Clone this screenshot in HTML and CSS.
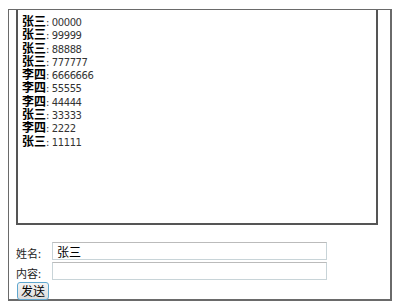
FILE: index.html
```html
<!DOCTYPE html>
<html lang="zh">
<head>
    <meta charset="UTF-8">
    <title>聊天室</title>
    <link rel="stylesheet" href="styles.css">
</head>
<body>
    <div class="frame">
        <div class="messages">
            <div class="msg"><b>张三</b>: 00000</div>
            <div class="msg"><b>张三</b>: 99999</div>
            <div class="msg"><b>张三</b>: 88888</div>
            <div class="msg"><b>张三</b>: 777777</div>
            <div class="msg"><b>李四</b>: 6666666</div>
            <div class="msg"><b>李四</b>: 55555</div>
            <div class="msg"><b>李四</b>: 44444</div>
            <div class="msg"><b>张三</b>: 33333</div>
            <div class="msg"><b>李四</b>: 2222</div>
            <div class="msg"><b>张三</b>: 11111</div>
        </div>
        <div class="form">
            <div class="row">
                <label>姓名:</label>
                <input type="text" value="张三">
            </div>
            <div class="row">
                <label>内容:</label>
                <input type="text">
            </div>
            <button>发送</button>
        </div>
    </div>
</body>
</html>
```

FILE: styles.css
```css
body {
    margin: 0;
    padding: 9px 8px 8px 8px;
    background: #fff;
    font-family: "Liberation Sans", "Noto Sans CJK SC", sans-serif;
    font-size: 12px;
    color: #000;
}

.frame {
    width: 381px;
    height: 289px;
    border: 2px solid #6a6a6a;
    border-left-width: 1px;
    border-top-width: 1px;
    box-sizing: content-box;
    display: flex;
    flex-direction: column;
}

.messages {
    flex-shrink: 0;
    margin-left: 7px;
    width: 354px;
    height: 209px;
    border: 2px solid #555;
    border-top: none;
    padding: 4px 0 0 4px;
    display: flex;
    flex-direction: column;
    color: #333;
    font-family: "DejaVu Sans", "Noto Sans CJK SC", sans-serif;
    font-size: 10px;
    letter-spacing: -0.4px;
}

.msg {
    height: 13.3px;
    line-height: 13px;
}

.msg b {
    font-family: "Noto Sans CJK SC", sans-serif;
    font-size: 12px;
    line-height: 13px;
    color: #000;
    letter-spacing: 0;
}

.form {
    padding: 17px 0 0 7px;
    display: flex;
    flex-direction: column;
    gap: 2px;
}

.row {
    display: flex;
    align-items: center;
    gap: 6px;
}

.row label {
    width: 30px;
    padding-top: 4px;
    font-family: "Noto Sans CJK SC", sans-serif;
    font-size: 11px;
    line-height: 14px;
    color: #222;
}

.row input {
    width: 275px;
    height: 18px;
    box-sizing: border-box;
    border: 1px solid #c8d4d8;
    border-top-color: #bbb;
    padding: 0 4px;
    font-family: "Noto Sans CJK SC", sans-serif;
    font-size: 12px;
    background: #fff;
    outline: none;
}

button {
    align-self: flex-start;
    margin-left: 1px;
    width: 32px;
    height: 18px;
    padding: 0;
    border: 1px solid #5fa7cf;
    border-radius: 3px;
    background: linear-gradient(#f4f4f4, #dcdcdc);
    font-family: "Noto Sans CJK SC", sans-serif;
    font-size: 12px;
    line-height: 14px;
    color: #000;
}
```
